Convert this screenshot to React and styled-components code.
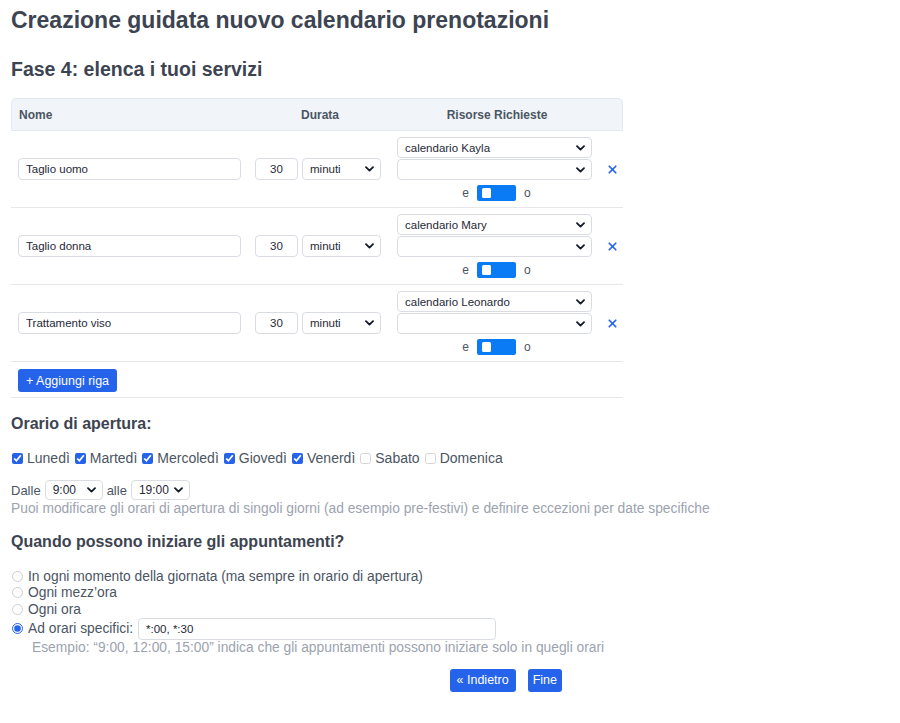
import React from 'react';
import styled, { createGlobalStyle } from 'styled-components';
import { X } from 'lucide-react';

const GlobalStyle = createGlobalStyle`
  body {
    margin: 0;
    background: #ffffff;
    font-family: "Liberation Sans", Arial, sans-serif;
    color: #4b5563;
  }
`;

const Page = styled.div`
  padding: 0 11px 30px;
`;

const Title = styled.h1`
  margin: 0;
  padding-top: 6px;
  font-size: 23px;
  line-height: 28px;
  font-weight: 700;
  color: #3d4451;
`;

const StepTitle = styled.h2`
  margin: 23px 0 0;
  font-size: 19.5px;
  line-height: 24px;
  font-weight: 700;
  color: #3d4451;
`;

const Table = styled.div`
  width: 612px;
  margin-top: 17px;
`;

const HeaderRow = styled.div`
  display: grid;
  grid-template-columns: 237px 142px 212px 21px;
  align-items: center;
  height: 31px;
  background: #f1f5f9;
  border: 1px solid #e2e8f0;
  border-radius: 5px 5px 0 0;
  font-size: 12px;
  font-weight: 700;
  color: #4b5563;
`;

const HeadCell = styled.div`
  padding-left: ${({ $center }) => ($center ? '0' : '7px')};
  text-align: ${({ $center }) => ($center ? 'center' : 'left')};
`;

const Row = styled.div`
  display: grid;
  grid-template-columns: 237px 142px 212px 21px;
  align-items: center;
  padding: 6px 0 6px;
  border-bottom: 1px solid #e5e7eb;
`;

const Cell = styled.div`
  padding-left: 7px;
  display: flex;
  align-items: center;
  gap: 4px;
`;

const TextInput = styled.input`
  box-sizing: border-box;
  width: ${({ $w }) => $w}px;
  height: 22px;
  padding: 0 7px;
  border: 1px solid #d9dde3;
  border-radius: 4px;
  font-family: "Liberation Sans", Arial, sans-serif;
  font-size: 11.5px;
  color: #1f2937;
  background: #fff;
  text-align: ${({ $center }) => ($center ? 'center' : 'left')};
  outline: none;
`;

const SelectWrap = styled.div`
  position: relative;
  width: ${({ $w }) => $w}px;
`;

const NativeSelect = styled.select`
  box-sizing: border-box;
  appearance: none;
  display: block;
  width: 100%;
  height: ${({ $h }) => $h || 22}px;
  padding: 0 18px 0 7px;
  border: 1px solid #d9dde3;
  border-radius: 4px;
  background: #fff;
  font-family: "Liberation Sans", Arial, sans-serif;
  font-size: ${({ $fs }) => $fs || 11.5}px;
  color: #1f2937;
  outline: none;
`;

const Chevron = styled.svg`
  position: absolute;
  right: 7px;
  top: 50%;
  margin-top: -3px;
  pointer-events: none;
`;

const Select = ({ w, h, fs, value, options }) => (
  <SelectWrap $w={w}>
    <NativeSelect $h={h} $fs={fs} defaultValue={value}>
      {options.map((o) => (
        <option key={o} value={o}>{o}</option>
      ))}
    </NativeSelect>
    <Chevron width="9" height="6" viewBox="0 0 9 6">
      <path d="M1 1.2 L4.5 4.6 L8 1.2" fill="none" stroke="#111827" strokeWidth="1.8" strokeLinecap="round" strokeLinejoin="round" />
    </Chevron>
  </SelectWrap>
);

const ResourceStack = styled.div`
  padding-left: 7px;
  display: flex;
  flex-direction: column;
  width: 195px;
  gap: 1px;
`;

const ToggleLine = styled.div`
  display: flex;
  justify-content: center;
  align-items: center;
  gap: 8px;
  margin-top: 4px;
  height: 16px;
  font-size: 12px;
  color: #4b5563;
  padding-left: 4px;
`;

const Toggle = styled.div`
  width: 39px;
  height: 16px;
  border-radius: 2px;
  background: #0b7bf5;
  display: flex;
  align-items: center;
  padding-left: 5px;
  box-sizing: border-box;
`;

const Knob = styled.div`
  width: 9px;
  height: 10px;
  border-radius: 1.5px;
  background: #ffffff;
`;

const RemoveCell = styled.div`
  display: flex;
  justify-content: center;
  color: #2563eb;
`;

const ButtonRow = styled.div`
  padding: 7px 7px 5px;
  border-bottom: 1px solid #e5e7eb;
`;

const Button = styled.button`
  display: block;
  height: 23px;
  padding: 0 ${({ $pad }) => $pad || 8}px;
  border: none;
  border-radius: 3px;
  background: #2563eb;
  color: #ffffff;
  font-family: "Liberation Sans", Arial, sans-serif;
  font-size: 12.5px;
`;

const Section = styled.h3`
  margin: ${({ $mt }) => $mt}px 0 0;
  font-size: 16px;
  line-height: 20px;
  font-weight: 700;
  color: #3d4451;
`;

const Days = styled.div`
  margin-top: 15px;
  font-size: 14px;
  line-height: 18px;
  display: flex;
  align-items: center;
  gap: 4px;
`;

const Check = styled.label`
  display: inline-flex;
  align-items: center;
  gap: 4px;
`;

const Box = styled.input`
  margin: 0 0 0 1px;
  width: 11px;
  height: 11px;
  accent-color: #2563eb;
  opacity: ${({ defaultChecked }) => (defaultChecked ? 1 : 0.3)};
`;

const HoursLine = styled.div`
  margin-top: 13px;
  display: flex;
  align-items: center;
  gap: 4px;
  font-size: 13px;
  color: #4b5563;
`;

const Hint = styled.div`
  margin-top: ${({ $mt }) => $mt || 0}px;
  padding-left: ${({ $indent }) => $indent || 0}px;
  font-size: 13.8px;
  line-height: 16px;
  color: #9ca3af;
`;

const Radios = styled.div`
  margin-top: 16px;
  display: flex;
  flex-direction: column;
  font-size: 13.8px;
  color: #4b5563;
`;

const RadioLine = styled.label`
  display: flex;
  align-items: center;
  gap: 5px;
  height: ${({ $h }) => $h || 16.5}px;
`;

const Radio = styled.input`
  margin: 0 0 0 1px;
  width: 11px;
  height: 11px;
  accent-color: #2563eb;
  opacity: ${({ defaultChecked }) => (defaultChecked ? 1 : 0.35)};
`;

const Footer = styled.div`
  width: 551px;
  margin-top: 13px;
  display: flex;
  justify-content: flex-end;
  gap: 12px;
`;

const services = [
  { name: 'Taglio uomo', calendar: 'calendario Kayla' },
  { name: 'Taglio donna', calendar: 'calendario Mary' },
  { name: 'Trattamento viso', calendar: 'calendario Leonardo' },
];

const days = [
  ['Lunedì', true],
  ['Martedì', true],
  ['Mercoledì', true],
  ['Giovedì', true],
  ['Venerdì', true],
  ['Sabato', false],
  ['Domenica', false],
];

const ServiceRow = ({ name, calendar }) => (
  <Row>
    <Cell>
      <TextInput $w={223} defaultValue={name} />
    </Cell>
    <Cell>
      <TextInput $w={43} $center defaultValue="30" />
      <Select w={79} value="minuti" options={['minuti', 'ore']} />
    </Cell>
    <ResourceStack>
      <Select w={195} h={21} value={calendar} options={[calendar]} />
      <Select w={195} h={21} value="" options={['']} />
      <ToggleLine>
        e
        <Toggle><Knob /></Toggle>
        o
      </ToggleLine>
    </ResourceStack>
    <RemoveCell>
      <X size={13} strokeWidth={3.2} />
    </RemoveCell>
  </Row>
);

export default function App() {
  return (
    <Page>
      <GlobalStyle />
      <Title>Creazione guidata nuovo calendario prenotazioni</Title>
      <StepTitle>Fase 4: elenca i tuoi servizi</StepTitle>

      <Table>
        <HeaderRow>
          <HeadCell>Nome</HeadCell>
          <HeadCell $center>Durata</HeadCell>
          <HeadCell $center>Risorse Richieste</HeadCell>
          <div />
        </HeaderRow>
        {services.map((s) => (
          <ServiceRow key={s.name} {...s} />
        ))}
        <ButtonRow>
          <Button>+ Aggiungi riga</Button>
        </ButtonRow>
      </Table>

      <Section $mt={16}>Orario di apertura:</Section>
      <Days>
        {days.map(([d, on]) => (
          <Check key={d}>
            <Box type="checkbox" defaultChecked={on} />
            {d}
          </Check>
        ))}
      </Days>
      <HoursLine>
        Dalle
        <Select w={58} h={20} fs={12} value="9:00" options={['9:00']} />
        alle
        <Select w={59} h={20} fs={12} value="19:00" options={['19:00']} />
      </HoursLine>
      <Hint $mt={1}>
        Puoi modificare gli orari di apertura di singoli giorni (ad esempio pre-festivi) e definire eccezioni per date specifiche
      </Hint>

      <Section $mt={15}>Quando possono iniziare gli appuntamenti?</Section>
      <Radios>
        <RadioLine>
          <Radio type="radio" name="start" />
          In ogni momento della giornata (ma sempre in orario di apertura)
        </RadioLine>
        <RadioLine>
          <Radio type="radio" name="start" />
          Ogni mezz’ora
        </RadioLine>
        <RadioLine>
          <Radio type="radio" name="start" />
          Ogni ora
        </RadioLine>
        <RadioLine $h={22}>
          <Radio type="radio" name="start" defaultChecked />
          Ad orari specifici:
          <TextInput $w={358} defaultValue="*:00, *:30" />
        </RadioLine>
      </Radios>
      <Hint $indent={21}>
        Esempio: “9:00, 12:00, 15:00” indica che gli appuntamenti possono iniziare solo in quegli orari
      </Hint>

      <Footer>
        <Button $pad={7}>« Indietro</Button>
        <Button $pad={5}>Fine</Button>
      </Footer>
    </Page>
  );
}
